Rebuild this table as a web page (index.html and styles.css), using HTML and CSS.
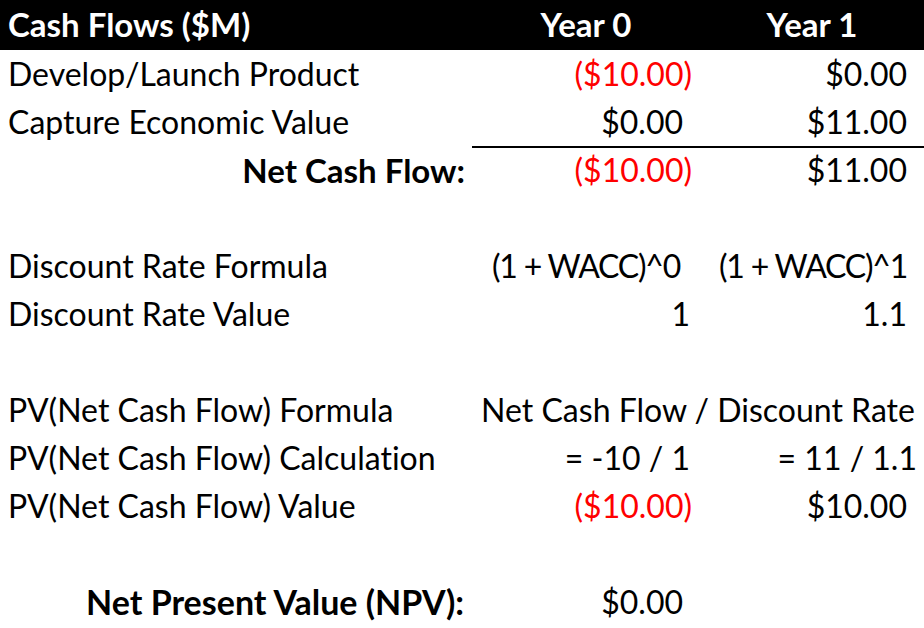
FILE: index.html
```html
<!DOCTYPE html>
<html lang="en">
<head>
<meta charset="utf-8">
<title>Cash Flows</title>
<link rel="stylesheet" href="styles.css">
</head>
<body>
<div class="sheet">
  <div class="row head">
    <div class="cell label">Cash Flows ($M)</div>
    <div class="cell center">Year 0</div>
    <div class="cell center">Year 1</div>
  </div>
  <div class="row">
    <div class="cell label">Develop/Launch Product</div>
    <div class="cell neg">($10.00)</div>
    <div class="cell pos">$0.00</div>
  </div>
  <div class="row">
    <div class="cell label">Capture Economic Value</div>
    <div class="cell pos rule">$0.00</div>
    <div class="cell pos rule">$11.00</div>
  </div>
  <div class="row">
    <div class="cell total">Net Cash Flow:</div>
    <div class="cell neg">($10.00)</div>
    <div class="cell pos">$11.00</div>
  </div>
  <div class="row"></div>
  <div class="row">
    <div class="cell label">Discount Rate Formula</div>
    <div class="cell center formula">(1 + WACC)^0</div>
    <div class="cell pos formula">(1 + WACC)^1</div>
  </div>
  <div class="row">
    <div class="cell label">Discount Rate Value</div>
    <div class="cell num">1</div>
    <div class="cell pos">1.1</div>
  </div>
  <div class="row"></div>
  <div class="row">
    <div class="cell label">PV(Net Cash Flow) Formula</div>
    <div class="cell span center">Net Cash Flow / Discount Rate</div>
  </div>
  <div class="row">
    <div class="cell label">PV(Net Cash Flow) Calculation</div>
    <div class="cell num">= -10 / 1</div>
    <div class="cell calc">= 11 / 1.1</div>
  </div>
  <div class="row">
    <div class="cell label">PV(Net Cash Flow) Value</div>
    <div class="cell neg">($10.00)</div>
    <div class="cell pos">$10.00</div>
  </div>
  <div class="row"></div>
  <div class="row">
    <div class="cell total npv">Net Present Value (NPV):</div>
    <div class="cell pos">$0.00</div>
    <div class="cell"></div>
  </div>
</div>
</body>
</html>
```

FILE: styles.css
```css
html, body {
  margin: 0;
  padding: 0;
  background: #ffffff;
}

body {
  font-family: "Lato", "Liberation Sans", sans-serif;
  font-size: 32px;
  color: #000000;
  font-variant-ligatures: none;
  font-feature-settings: "liga" 0, "clig" 0;
}

.sheet {
  width: 924px;
  display: flex;
  flex-direction: column;
}

.row {
  display: grid;
  grid-template-columns: 472px 228px 224px;
  height: 48px;
}

.row.head {
  height: 50px;
  background: #000000;
  color: #ffffff;
  font-weight: 700;
  font-size: 33px;
}

.cell {
  box-sizing: border-box;
  height: 100%;
  line-height: 48px;
  white-space: nowrap;
  text-align: right;
}

.head .cell {
  line-height: 48px;
}

.label {
  text-align: left;
  padding-left: 8px;
}

.total {
  font-weight: 700;
  font-size: 33px;
  padding-right: 7px;
}

.npv {
  font-size: 34px;
  padding-right: 8px;
}

.center {
  text-align: center;
}

.span {
  grid-column: 2 / span 2;
}

.formula {
  letter-spacing: -1.2px;
}

.neg {
  color: #ff0000;
  padding-right: 8px;
}

.pos {
  padding-right: 17px;
}

.num {
  padding-right: 10px;
}

.calc {
  padding-right: 7px;
}

.rule {
  border-bottom: 2px solid #000000;
}
```
